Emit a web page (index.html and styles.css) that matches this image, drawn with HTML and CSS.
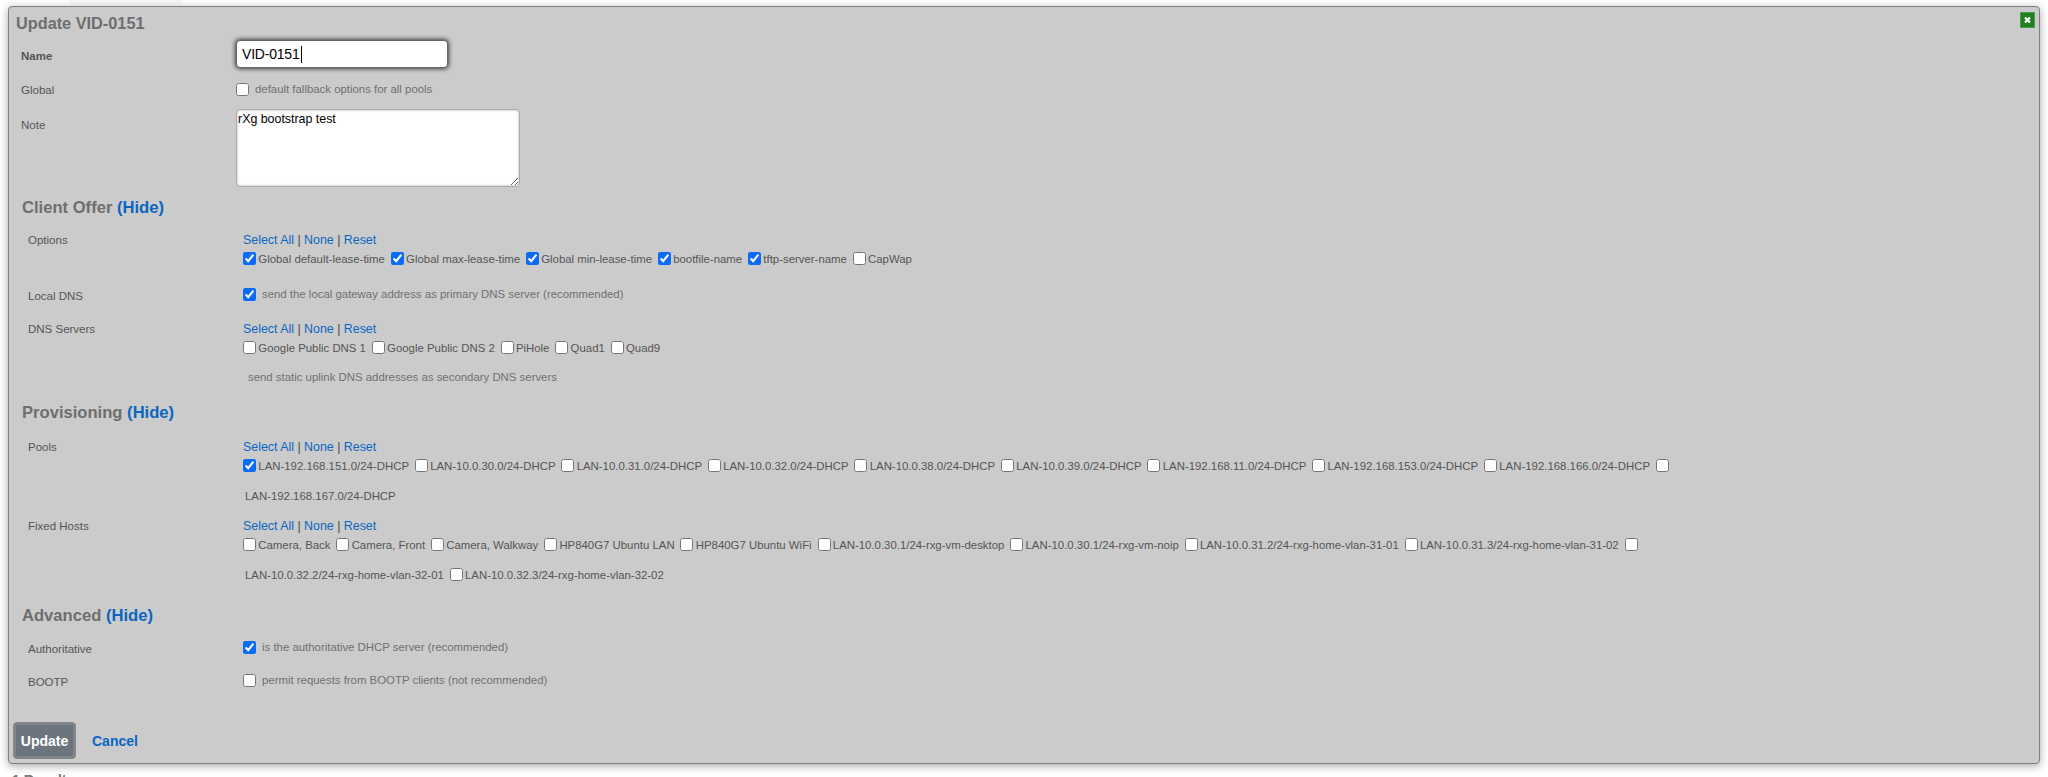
FILE: index.html
```html
<!DOCTYPE html>
<html lang="en">
<head>
<meta charset="utf-8">
<title>Update VID-0151</title>
<link rel="stylesheet" href="styles.css">
</head>
<body>
<div class="strip"></div>
<form class="modal">
  <a class="close" href="#"><svg viewBox="0 0 15 16" width="15" height="16"><rect x="0.5" y="0.5" width="14" height="15" fill="#1f7f1f" stroke="#4a9a4a"/><path d="M5 5.5l5 5M10 5.5l-5 5" stroke="#fff" stroke-width="2.2"/></svg></a>
  <h2 class="title">Update VID-0151</h2>

  <div class="top-row r-name"><label class="lbl strong">Name</label><div class="name-wrap"><input class="name-input" type="text" value="VID-0151"><span class="caret"></span></div></div>
  <div class="top-row r-global"><label class="lbl">Global</label><div class="hint"><input type="checkbox" class="cb"><span>default fallback options for all pools</span></div></div>
  <div class="top-row r-note"><label class="lbl">Note</label><textarea class="note">rXg bootstrap test</textarea></div>

  <h3 class="sec sec-client">Client Offer <a href="#">(Hide)</a></h3>
  <div class="row r-options"><label class="lbl">Options</label><div class="ctl">
    <div class="links"><a href="#">Select All</a> | <a href="#">None</a> | <a href="#">Reset</a></div>
    <div class="list">
      <label><input type="checkbox" class="cb" checked>Global default-lease-time</label>
      <label><input type="checkbox" class="cb" checked>Global max-lease-time</label>
      <label><input type="checkbox" class="cb" checked>Global min-lease-time</label>
      <label><input type="checkbox" class="cb" checked>bootfile-name</label>
      <label><input type="checkbox" class="cb" checked>tftp-server-name</label>
      <label><input type="checkbox" class="cb">CapWap</label>
    </div>
  </div></div>
  <div class="row r-local"><label class="lbl">Local DNS</label><div class="hint"><input type="checkbox" class="cb" checked><span>send the local gateway address as primary DNS server (recommended)</span></div></div>
  <div class="row r-dns"><label class="lbl">DNS Servers</label><div class="ctl">
    <div class="links"><a href="#">Select All</a> | <a href="#">None</a> | <a href="#">Reset</a></div>
    <div class="list">
      <label><input type="checkbox" class="cb">Google Public DNS 1</label>
      <label><input type="checkbox" class="cb">Google Public DNS 2</label>
      <label><input type="checkbox" class="cb">PiHole</label>
      <label><input type="checkbox" class="cb">Quad1</label>
      <label><input type="checkbox" class="cb">Quad9</label>
    </div>
    <div class="uplink">send static uplink DNS addresses as secondary DNS servers</div>
  </div></div>

  <h3 class="sec sec-prov">Provisioning <a href="#">(Hide)</a></h3>
  <div class="row r-pools"><label class="lbl">Pools</label><div class="ctl">
    <div class="links"><a href="#">Select All</a> | <a href="#">None</a> | <a href="#">Reset</a></div>
    <div class="list">
      <label><input type="checkbox" class="cb" checked>LAN-192.168.151.0/24-DHCP</label>
      <label><input type="checkbox" class="cb">LAN-10.0.30.0/24-DHCP</label>
      <label><input type="checkbox" class="cb">LAN-10.0.31.0/24-DHCP</label>
      <label><input type="checkbox" class="cb">LAN-10.0.32.0/24-DHCP</label>
      <label><input type="checkbox" class="cb">LAN-10.0.38.0/24-DHCP</label>
      <label><input type="checkbox" class="cb">LAN-10.0.39.0/24-DHCP</label>
      <label><input type="checkbox" class="cb">LAN-192.168.11.0/24-DHCP</label>
      <label><input type="checkbox" class="cb">LAN-192.168.153.0/24-DHCP</label>
      <label><input type="checkbox" class="cb">LAN-192.168.166.0/24-DHCP</label>
      <label><input type="checkbox" class="cb"></label>
    </div>
    <div class="list second"><label class="nocb">LAN-192.168.167.0/24-DHCP</label></div>
  </div></div>
  <div class="row r-fixed"><label class="lbl">Fixed Hosts</label><div class="ctl">
    <div class="links"><a href="#">Select All</a> | <a href="#">None</a> | <a href="#">Reset</a></div>
    <div class="list">
      <label><input type="checkbox" class="cb">Camera, Back</label>
      <label><input type="checkbox" class="cb">Camera, Front</label>
      <label><input type="checkbox" class="cb">Camera, Walkway</label>
      <label><input type="checkbox" class="cb">HP840G7 Ubuntu LAN</label>
      <label><input type="checkbox" class="cb">HP840G7 Ubuntu WiFi</label>
      <label><input type="checkbox" class="cb">LAN-10.0.30.1/24-rxg-vm-desktop</label>
      <label><input type="checkbox" class="cb">LAN-10.0.30.1/24-rxg-vm-noip</label>
      <label><input type="checkbox" class="cb">LAN-10.0.31.2/24-rxg-home-vlan-31-01</label>
      <label><input type="checkbox" class="cb">LAN-10.0.31.3/24-rxg-home-vlan-31-02</label>
      <label><input type="checkbox" class="cb"></label>
    </div>
    <div class="list second">
      <label class="nocb">LAN-10.0.32.2/24-rxg-home-vlan-32-01</label>
      <label><input type="checkbox" class="cb">LAN-10.0.32.3/24-rxg-home-vlan-32-02</label>
    </div>
  </div></div>

  <h3 class="sec sec-adv">Advanced <a href="#">(Hide)</a></h3>
  <div class="row r-auth"><label class="lbl">Authoritative</label><div class="hint"><input type="checkbox" class="cb" checked><span>is the authoritative DHCP server (recommended)</span></div></div>
  <div class="row r-boot"><label class="lbl">BOOTP</label><div class="hint"><input type="checkbox" class="cb"><span>permit requests from BOOTP clients (not recommended)</span></div></div>

  <div class="actions"><button class="btn" type="button">Update</button><a class="cancel" href="#">Cancel</a></div>
</form>
<div class="under">1 Result</div>
</body>
</html>
```
FILE: styles.css
```css
* { box-sizing: border-box; }
html, body { margin: 0; padding: 0; height: 777px; overflow: hidden; background: #fff; }
body { font-family: "Liberation Sans", Arial, sans-serif; font-size: 11.4px; color: #555; padding: 0 8px; }
a { color: #0a66c2; text-decoration: none; }
.strip { height: 5px; width: 112px; margin-left: 62px; background: #f8f8f8; }
.modal { position: relative; display: block; width: 2032px; height: 758px; margin-top: 1px; background: #cbcbcb; border: 1px solid #808080; border-radius: 4px; box-shadow: 0 2px 8px rgba(0,0,0,.35); padding: 0 0 0 12px; }
.close { position: absolute; top: 5px; right: 4px; width: 15px; height: 16px; }
.close svg { display: block; }
.under { margin: 8px 0 0 4px; font-size: 14px; line-height: 16px; font-weight: bold; color: #777; }
.title { margin: 0; padding-top: 6px; margin-left: -5px; font-size: 16.3px; line-height: 20px; font-weight: bold; color: #6e6e6e; }
.top-row { display: flex; align-items: flex-start; }
.lbl { display: block; width: 215px; flex: none; font-size: 11.5px; line-height: 14px; color: #555; }
.strong { font-weight: bold; }
.name-wrap { position: relative; width: 212px; height: 28px; }
.name-input { display: block; width: 212px; height: 28px; border: 1px solid #666; border-radius: 4px; box-shadow: 0 0 4px 1px rgba(0,0,0,.7); padding: 0 5px; font: 14px "Liberation Sans", Arial, sans-serif; letter-spacing: -.2px; color: #000; background: #fff; outline: none; }
.caret { position: absolute; left: 65px; top: 6px; width: 1px; height: 17px; background: #000; }
.r-name { margin-top: 7px; }
.r-name .lbl { padding-top: 9px; }
.r-global { margin-top: 13px; }
.r-global .lbl { padding-top: 2px; }
.hint { display: flex; align-items: center; font-size: 11.4px; line-height: 14px; color: #707070; }
.hint .cb { margin: 0 6px 0 0; }
.cb { width: 13px; height: 13px; margin: 0 2.3px 0 0; accent-color: #0a6cf5; vertical-align: -2px; }
.r-global .hint { padding-top: 1px; }
.r-note { margin-top: 12px; }
.r-note .lbl { padding-top: 9px; }
.note { width: 284px; height: 78px; border: 1px solid #aaa; border-radius: 4px; box-shadow: inset 0 0 3px rgba(0,0,0,.3); padding: 2px 1px; font: 12.4px "Liberation Sans", Arial, sans-serif; color: #000; background: #fff; resize: both; outline: none; }
.sec { margin: 0 0 0 -1px; font-size: 16.6px; line-height: 20px; font-weight: bold; color: #6e6e6e; padding-left: 2px; }
.row { display: flex; align-items: flex-start; padding-left: 7px; }
.row .lbl { width: 215px; }
.ctl { font-size: 11.4px; line-height: 14px; color: #555; }
.links { font-size: 12.4px; line-height: 14px; color: #444; }
.list { margin-top: 5px; line-height: 14px; white-space: nowrap; }
.list label { margin-right: 2.7px; }
.second { margin-top: 16px; padding-left: 2px; }
.uplink { margin-top: 15px; padding-left: 5px; color: #707070; }
.sec-client { margin-top: 11px; }
.r-options { margin-top: 15px; }
.r-local { margin-top: 21px; }
.r-local .lbl { padding-top: 2px; }
.r-dns { margin-top: 19px; }
.sec-prov { margin-top: 19px; }
.r-pools { margin-top: 17px; }
.r-fixed { margin-top: 16px; }
.sec-adv { margin-top: 24px; }
.r-auth { margin-top: 14px; }
.r-auth .lbl { padding-top: 2px; }
.r-boot { margin-top: 17px; }
.r-boot .lbl { padding-top: 2px; }
.actions { display: flex; align-items: center; margin: 33px 0 0 -8px; }
.btn { width: 63px; height: 37px; background: #6c757d; color: #fff; border: 1px solid #888; border-radius: 4px; box-shadow: inset 0 0 0 2px #7d858c; font: bold 14px "Liberation Sans", Arial, sans-serif; padding: 0; }
.cancel { margin-left: 16px; font-size: 14px; font-weight: bold; }
```
